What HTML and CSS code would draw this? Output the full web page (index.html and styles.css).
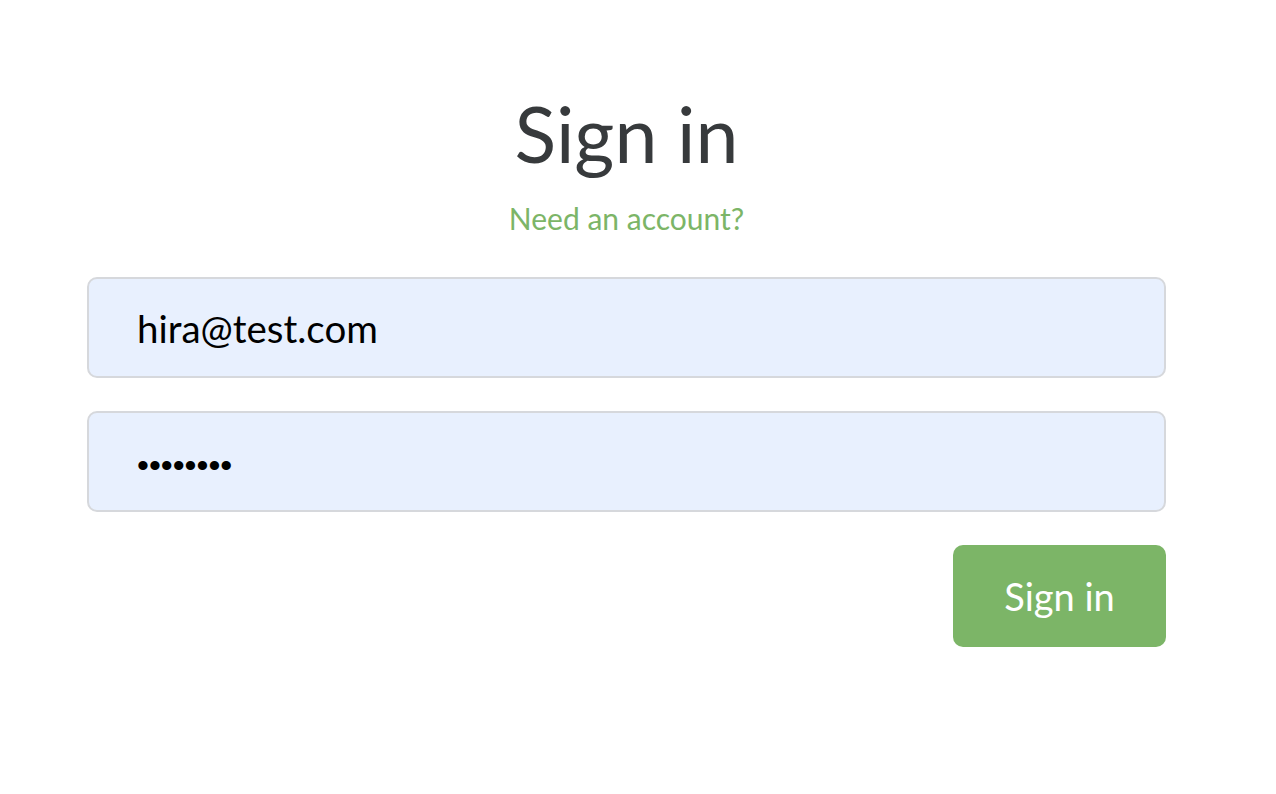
FILE: index.html
```html
<!DOCTYPE html>
<html lang="en">
<head>
<meta charset="utf-8">
<title>Sign in</title>
<link rel="stylesheet" href="styles.css">
</head>
<body>
<div class="page">
  <h1 class="title">Sign in</h1>
  <p class="switch"><a href="#" class="switch-link">Need an account?</a></p>
  <form class="form">
    <input class="field" type="email" value="hira@test.com" placeholder="Email">
    <input class="field field-password" type="password" value="12345678" placeholder="Password">
    <div class="actions">
      <button type="button" class="btn">Sign in</button>
    </div>
  </form>
</div>
</body>
</html>
```
FILE: styles.css
```css
html, body {
  margin: 0;
  padding: 0;
  background: #ffffff;
}
body {
  font-family: "Lato", "Open Sans", sans-serif;
}
.page {
  padding: 85px 110px 0 87px;
  display: flex;
  flex-direction: column;
}
.title {
  margin: 0;
  font-size: 77px;
  line-height: 96px;
  font-weight: 400;
  color: #373a3c;
  text-align: center;
}
.switch {
  margin: 12px 0 34px;
  font-size: 30px;
  line-height: 50px;
  text-align: center;
}
.switch-link {
  color: #7cb567;
  text-decoration: none;
}
.form {
  display: flex;
  flex-direction: column;
  gap: 33px;
}
.field {
  box-sizing: border-box;
  height: 101px;
  width: 100%;
  margin: 0;
  padding: 0 48px;
  border: 2px solid #d6d8dc;
  border-radius: 10px;
  background: #e8f0fe;
  font-family: inherit;
  font-size: 38.5px;
  color: #000000;
  outline: none;
}
.field-password {
  font-family: "Liberation Sans", sans-serif;
  font-size: 34px;
  padding-top: 8px;
}
.actions {
  display: flex;
  justify-content: flex-end;
}
.btn {
  width: 213px;
  height: 102px;
  border: none;
  border-radius: 10px;
  background: #7cb567;
  color: #ffffff;
  font-family: inherit;
  font-size: 38px;
  cursor: pointer;
}
```
